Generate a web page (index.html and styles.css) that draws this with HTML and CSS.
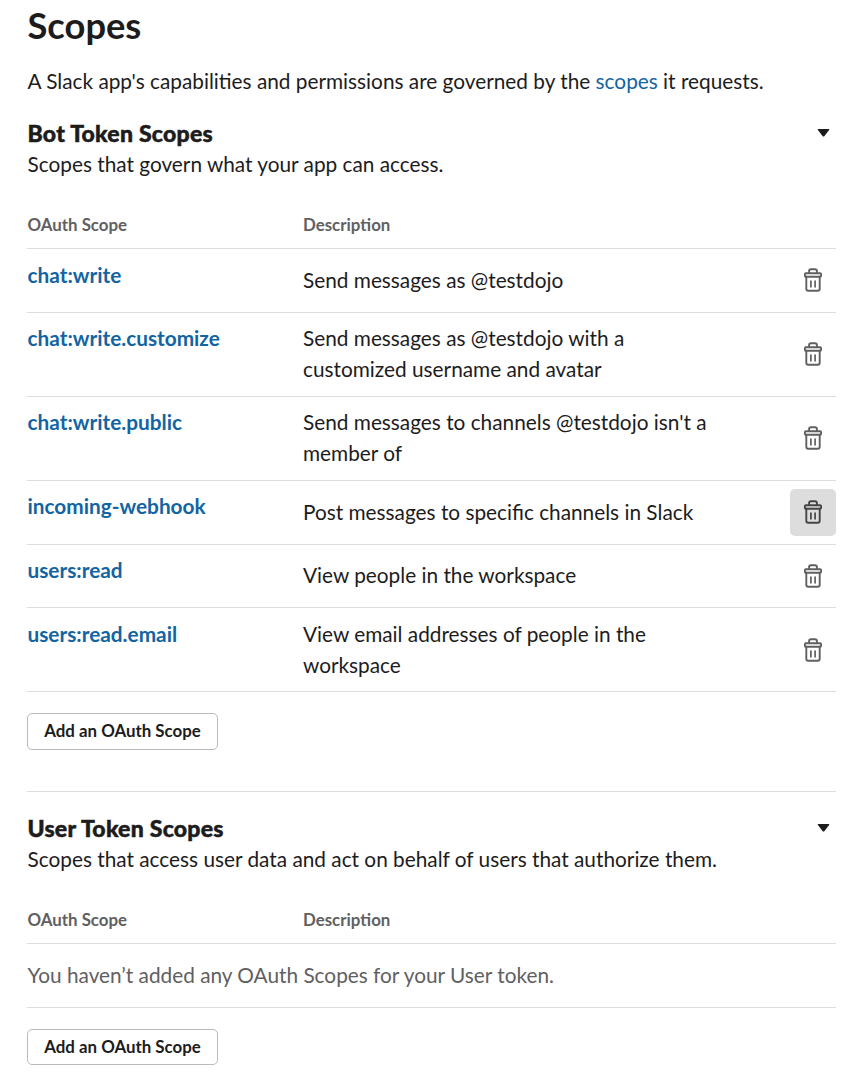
FILE: index.html
```html
<!DOCTYPE html>
<html lang="en">
<head>
<meta charset="utf-8">
<title>Scopes</title>
<link rel="stylesheet" href="styles.css">
</head>
<body>
<svg class="sprite" aria-hidden="true">
  <symbol id="trash" viewBox="0 0 20 26">
    <g fill="none" stroke="currentColor" stroke-width="1.900" stroke-linejoin="round" stroke-linecap="round">
      <path d="M6.100 6V4Q6.100 2.200 8 2.200h4Q13.900 2.200 13.900 4V6"/>
      <rect x="1.900" y="6.300" width="16.200" height="3.500" rx="1"/>
      <path d="M3.300 9.800v12Q3.300 23.800 5.200 23.800h9.600Q16.700 23.800 16.700 21.800V9.800"/>
      <path d="M7.900 14v5.800M12.100 14v5.800" stroke-width="1.700"/>
    </g>
  </symbol>
</svg>
<main class="page">
  <h1 class="title">Scopes</h1>
  <p class="intro">A Slack app's capabilities and permissions are governed by the <a href="#">scopes</a> it requests.</p>
  <section class="section">
    <header class="heading"><h2>Bot Token Scopes</h2><svg class="caret" viewBox="0 0 12 8"><path d="M1 0h10q1.500 0 .6 1.100L7 7q-1 1-2 0L.4 1.100Q-.5 0 1 0z"/></svg></header>
    <p class="sub">Scopes that govern what your app can access.</p>
    <div class="head"><span>OAuth Scope</span><span>Description</span></div>
    <div class="row first"><a href="#">chat:write</a><p>Send messages as @testdojo</p><button class="del"><svg><use href="#trash"/></svg></button></div>
    <div class="row tall"><a href="#">chat:write.customize</a><p>Send messages as @testdojo with a<br>customized username and avatar</p><button class="del"><svg><use href="#trash"/></svg></button></div>
    <div class="row tall"><a href="#">chat:write.public</a><p>Send messages to channels @testdojo isn't a<br>member of</p><button class="del"><svg><use href="#trash"/></svg></button></div>
    <div class="row"><a href="#">incoming-webhook</a><p>Post messages to specific channels in Slack</p><button class="del active"><svg><use href="#trash"/></svg></button></div>
    <div class="row short"><a href="#">users:read</a><p>View people in the workspace</p><button class="del"><svg><use href="#trash"/></svg></button></div>
    <div class="row tall last"><a href="#">users:read.email</a><p>View email addresses of people in the<br>workspace</p><button class="del"><svg><use href="#trash"/></svg></button></div>
    <button class="add">Add an OAuth Scope</button>
  </section>
  <section class="section user">
    <header class="heading"><h2>User Token Scopes</h2><svg class="caret" viewBox="0 0 12 8"><path d="M1 0h10q1.500 0 .6 1.100L7 7q-1 1-2 0L.4 1.100Q-.5 0 1 0z"/></svg></header>
    <p class="sub">Scopes that access user data and act on behalf of users that authorize them.</p>
    <div class="head"><span>OAuth Scope</span><span>Description</span></div>
    <p class="empty">You haven’t added any OAuth Scopes for your User token.</p>
    <button class="add compact">Add an OAuth Scope</button>
  </section>
</main>
</body>
</html>
```
FILE: styles.css
```css
* { box-sizing: border-box; }
body { margin: 0; background: #fff; color: #1d1c1d; font-family: Lato, sans-serif; font-size: 20.8px; line-height: 31px; }
h1, h2, p { margin: 0; }
a { color: #1264a3; text-decoration: none; }
button { font-family: inherit; color: inherit; }
.sprite { display: none; }
.page { width: 809px; margin-left: 27px; }
.title, .intro, .heading h2, .sub, .row a, .empty, .head span:first-child { padding-left: .5px; }
.title { padding-top: 1px; font-size: 36.3px; line-height: 48px; font-weight: 700; }
.intro { margin-top: 16px; }
.section { margin-top: 22px; }
.heading { display: flex; justify-content: space-between; align-items: center; height: 31px; padding-right: 6px; }
.heading h2 { font-size: 23px; line-height: 31px; font-weight: 900; letter-spacing: .26px; -webkit-text-stroke: .5px #1d1c1d; }
.caret { width: 13px; height: 8px; margin-bottom: 2px; fill: #1d1c1d; }
.sub { height: 31px; line-height: 29px; }
.head { display: grid; grid-template-columns: 276px 1fr; height: 69px; padding-top: 29px; font-size: 16.87px; font-weight: 700; color: #616061; border-bottom: 1px solid #ddd; }
.row { display: grid; grid-template-columns: 276px 1fr 46px; align-items: center; height: 64px; border-bottom: 1px solid #ddd; }
.row a { align-self: start; margin-top: 9px; font-weight: 700; }
.row p { margin-bottom: 2px; }
.first a, .last a { margin-top: 10px; }
.tall { height: 84px; }
.tall p, .short p { margin-bottom: 4px; }
.last p { margin-bottom: 2px; }
.short { height: 63px; }
.del { display: grid; place-items: center; width: 46px; height: 47px; padding: 0 0 1px; border: 0; border-radius: 5px; background: none; color: #616061; }
.last .del { padding: 1px 0 0; }
.del svg { width: 20px; height: 26px; }
.active { background: #ddd; color: #454545; }
.add { display: block; width: 191px; height: 37px; margin-top: 21px; padding: 0 0 2px; border: 1px solid #bbb; border-radius: 5px; background: #fff; font-size: 16.87px; font-weight: 700; }
.compact { height: 36px; padding-bottom: 1px; }
.user { margin-top: 41px; padding-top: 21px; border-top: 1px solid #ddd; }
.empty { height: 64px; padding-top: 15px; color: #616061; border-bottom: 1px solid #ddd; }
```
